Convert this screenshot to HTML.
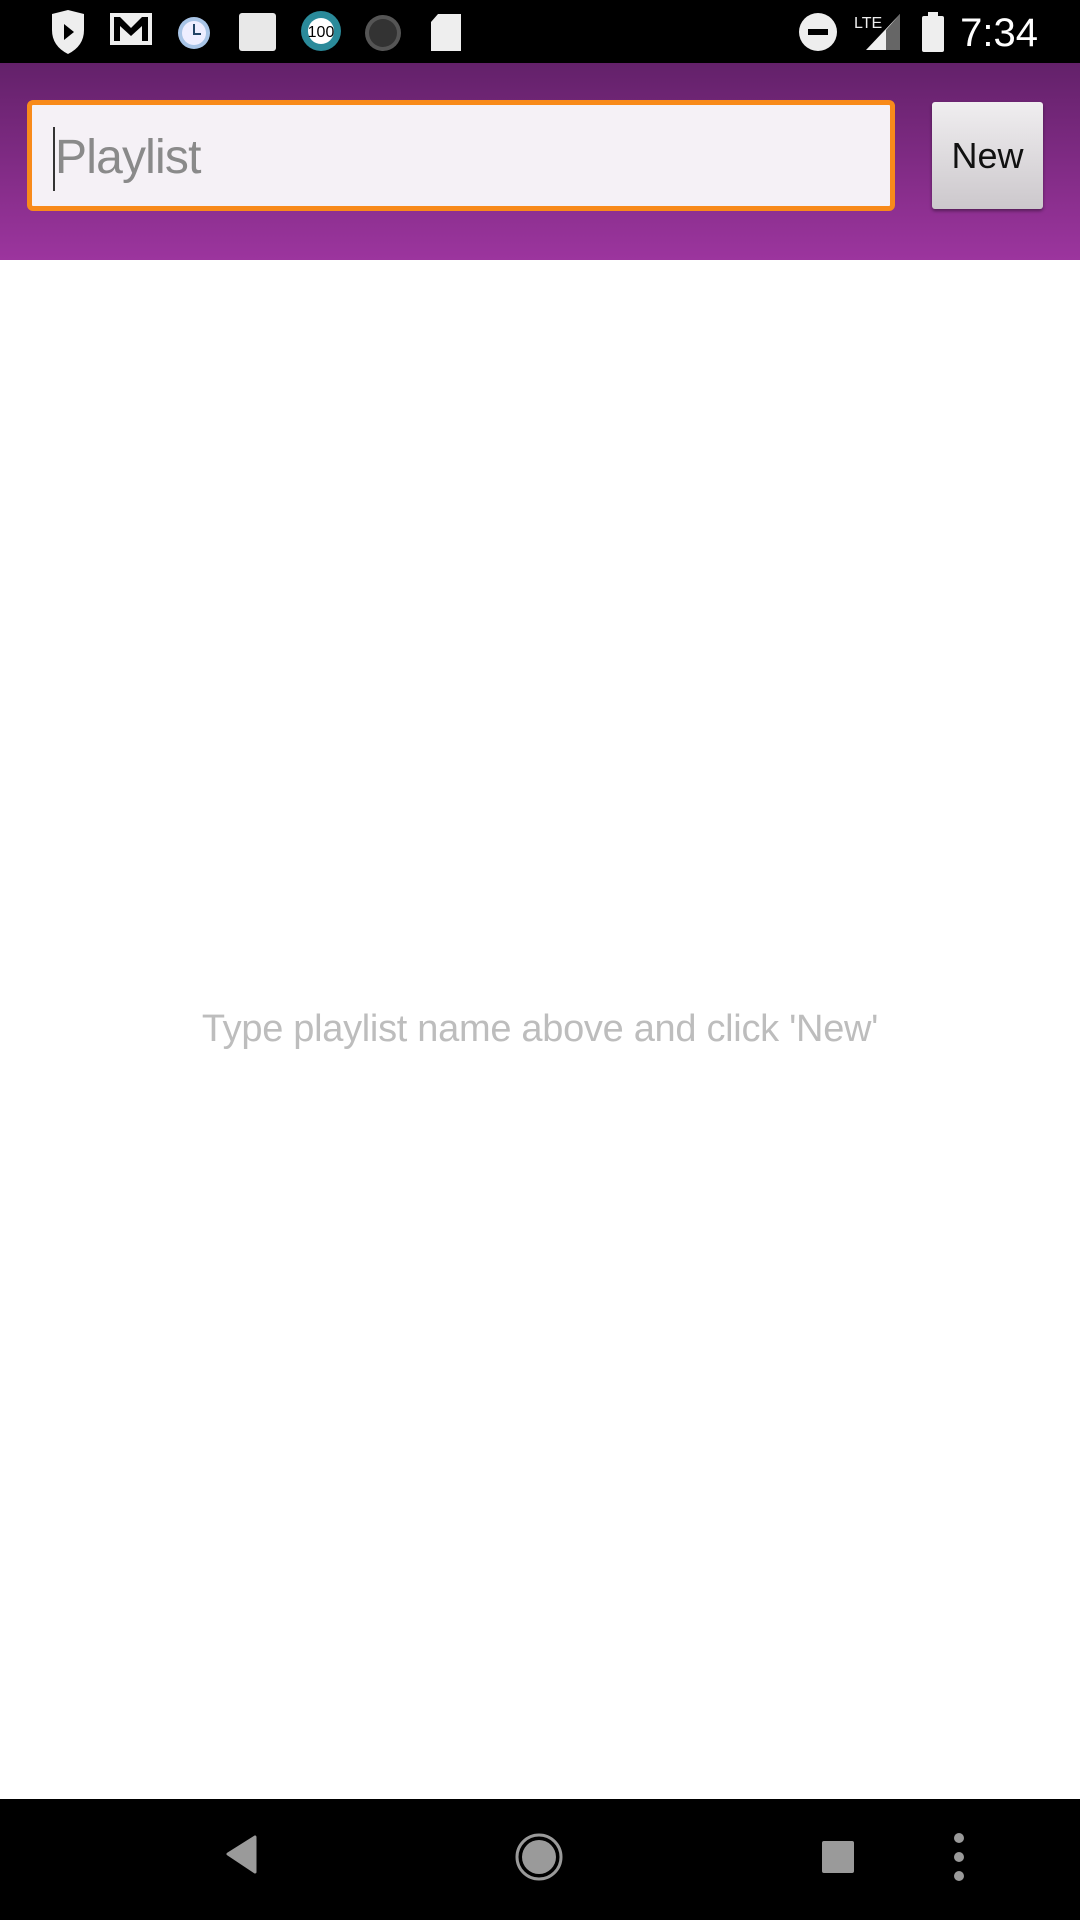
<!DOCTYPE html>
<html><head><meta charset="utf-8"><style>
*{margin:0;padding:0;box-sizing:border-box}
body{width:1080px;height:1920px;background:#fff;position:relative;overflow:hidden;font-family:"Liberation Sans",sans-serif}
#sb{position:absolute;left:0;top:0;width:1080px;height:63px;background:#000}
#bar{position:absolute;left:0;top:63px;width:1080px;height:197px;background:linear-gradient(#63216a,#9c359e)}
#field{position:absolute;left:27px;top:100px;width:868px;height:111px;border:5px solid #f88a1a;border-radius:6px;background:#f5f1f6}
#field span{position:absolute;left:23px;top:25px;font-size:48px;color:#8a8a8a;letter-spacing:-0.8px}
#caret{position:absolute;left:21px;top:22px;width:2px;height:64px;background:#333}
#btn{position:absolute;left:932px;top:102px;width:111px;height:107px;background:linear-gradient(#f0eef0,#ccc8cc);border-radius:3px;box-shadow:0 2px 3px rgba(0,0,0,.4);font-size:36px;text-align:center;line-height:107px;color:#111}
#msg{position:absolute;left:0;width:1080px;top:1008px;text-align:center;font-size:38px;color:#bdbdbd;letter-spacing:-0.3px}
#nav{position:absolute;left:0;top:1799px;width:1080px;height:121px;background:#000}
</style></head><body>
<div id="sb">
<svg width="1080" height="63" style="position:absolute;left:0;top:0">
<path d="M52 14 L68 10 L84 14 L84 30 Q84 46 68 54 Q52 46 52 30Z" fill="#eee"/><path d="M64 24 L74 32 L64 40Z" fill="#000"/>
<rect x="110" y="13" width="42" height="32" fill="#eee"/><path d="M114 17 L114 41 L120 41 L120 26 L131 36 L142 26 L142 41 L148 41 L148 17 L142 17 L131 28 L120 17Z" fill="#000"/>
<circle cx="194" cy="33" r="16" fill="#a8c4e6"/><circle cx="194" cy="33" r="12" fill="#eef"/><path d="M194 24V34H201" stroke="#246" stroke-width="2" fill="none"/>
<rect x="239" y="13" width="37" height="38" rx="3" fill="#e8e8e8"/>
<circle cx="321" cy="31" r="20" fill="#2a8a9a"/><circle cx="321" cy="31" r="13" fill="#fff"/><text x="321" y="37" font-size="16" text-anchor="middle" fill="#000" font-family="Liberation Sans">100</text>
<circle cx="383" cy="33" r="18" fill="#555"/><circle cx="383" cy="33" r="14" fill="#333"/>
<path d="M438 14 H461 V51 H431 V22Z" fill="#eee"/>
<circle cx="818" cy="32" r="19" fill="#eee"/><rect x="808" y="29" width="20" height="6" fill="#000"/>
<text x="854" y="28" font-size="16" fill="#eee" font-family="Liberation Sans">LTE</text>
<path d="M866 50 L900 14 V50Z" fill="#eee"/><path d="M886 30 L900 14 V50 H886Z" fill="#666"/>
<rect x="922" y="16" width="22" height="36" rx="2" fill="#eee"/><rect x="928" y="12" width="10" height="5" fill="#eee"/>
<text x="1038" y="46" font-size="40" fill="#fff" text-anchor="end" font-family="Liberation Sans">7:34</text>
</svg></div>
<div id="bar"></div>
<div id="field"><div id="caret"></div><span>Playlist</span></div>
<div id="btn">New</div>
<div id="msg">Type playlist name above and click 'New'</div>
<div id="nav"><svg width="1080" height="121">
<path d="M255 38 L255 73 L228 55Z" fill="#9a9a9a" stroke="#9a9a9a" stroke-width="3" stroke-linejoin="round"/>
<circle cx="539" cy="58" r="22" fill="none" stroke="#9a9a9a" stroke-width="3"/><circle cx="539" cy="58" r="17" fill="#9a9a9a"/>
<rect x="822" y="42" width="32" height="32" rx="2" fill="#9a9a9a"/>
<circle cx="959" cy="39" r="5" fill="#9a9a9a"/><circle cx="959" cy="58" r="5" fill="#9a9a9a"/><circle cx="959" cy="77" r="5" fill="#9a9a9a"/>
</svg></div>
</body></html>
